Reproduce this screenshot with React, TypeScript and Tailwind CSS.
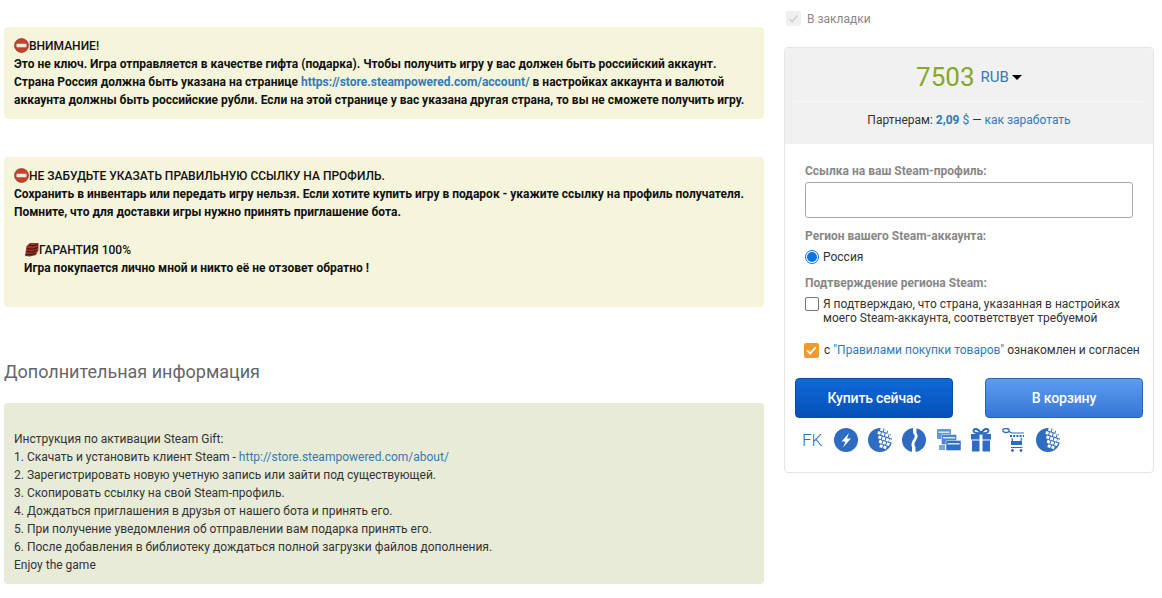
import React from 'react';

const NoEntry = () => (
  <svg width="15" height="15" viewBox="0 0 15 15" className="inline-block align-[-3px]">
    <circle cx="7.5" cy="7.5" r="7" fill="#c8402c" />
    <circle cx="7.5" cy="7.5" r="7" fill="none" stroke="#7d2a1c" strokeWidth="0.6" />
    <rect x="2.5" y="5.8" width="10" height="3.4" rx="0.6" fill="#f4e9df" />
  </svg>
);

const Guarantee = () => (
  <svg width="15" height="15" viewBox="0 0 15 15" className="inline-block align-[-3px]">
    <path d="M1 14 L2.5 4 L6 1 L14.5 1 L14.5 8 L12 13 L6 14.5Z" fill="#9a3226" />
    <path d="M5 3 Q9 5 14 2.5 M3 6.5 Q8 8.5 14 5.5 M2.5 9.5 Q8 11.5 13 8.5 M2 12.5 Q7 13.5 11.5 11.5" stroke="#3a120c" strokeWidth="1" fill="none" />
  </svg>
);

const Webmoney = () => (
  <svg width="24" height="24" viewBox="0 0 24 24">
    <circle cx="12" cy="12" r="12" fill="#2d6cc0" />
    <g transform="rotate(18 12 12)" fill="#fff">
      {[
        [9, 0], [13, 0], [17, 1], [7.5, 4], [11.5, 4], [15.5, 4], [19.5, 4], [9.5, 8], [13.5, 8], [17.5, 8], [21, 8],
        [11.5, 12], [15.5, 12], [19.5, 12], [13.5, 16], [17.5, 16],
      ].map(([x, y]) => (
        <rect key={`${x}-${y}`} x={x} y={y} width="3" height="3" />
      ))}
    </g>
  </svg>
);

const Bolt = () => (
  <svg width="24" height="24" viewBox="0 0 24 24">
    <circle cx="12" cy="12" r="12" fill="#2d6cc0" />
    <path d="M15 5 L7.5 13.5 H11.5 L9 19.5 L17 10.5 H13 Z" fill="#fff" />
  </svg>
);

const Split = () => (
  <svg width="24" height="24" viewBox="0 0 24 24">
    <circle cx="12" cy="12" r="12" fill="#2d6cc0" />
    <path d="M11 -1 L11 5 Q14.5 8 11 12 Q8.5 15.5 10 19 L10 25 L13.5 25 L13.5 19 Q11 16 14 12.5 Q17 8 14.5 5 L14.5 -1Z" fill="#fff" />
  </svg>
);

const Cards = () => (
  <svg width="24" height="24" viewBox="0 0 24 24">
    <rect x="0" y="1" width="14" height="10" rx="1" fill="#5f97d8" />
    <rect x="1.5" y="3.5" width="11" height="1.5" fill="#d6e5f6" />
    <rect x="4.5" y="6.5" width="15" height="10" rx="1" fill="#4a86d0" stroke="#d6e5f6" strokeWidth="0.6" />
    <rect x="6" y="9" width="12" height="1.5" fill="#d6e5f6" />
    <rect x="9" y="12.5" width="15" height="10" rx="1" fill="#2f70c4" stroke="#d6e5f6" strokeWidth="0.6" />
    <rect x="10.5" y="15" width="12" height="1.5" fill="#d6e5f6" />
    <rect x="2" y="17" width="6" height="5" fill="#79a6de" />
  </svg>
);

const Gift = () => (
  <svg width="20" height="24" viewBox="0 0 20 24">
    <path d="M10 5.5 C7 0 2.5 0 2.5 2.8 C2.5 5 6 5.5 10 5.5 C14 5.5 17.5 5 17.5 2.8 C17.5 0 13 0 10 5.5Z" fill="none" stroke="#2d6cc0" strokeWidth="2" />
    <rect x="0" y="6" width="8.5" height="5.5" fill="#2d6cc0" />
    <rect x="11.5" y="6" width="8.5" height="5.5" fill="#2d6cc0" />
    <rect x="1" y="12.5" width="7.5" height="11" fill="#2d6cc0" />
    <rect x="11.5" y="12.5" width="7.5" height="11" fill="#2d6cc0" />
  </svg>
);

const Cart = () => (
  <svg width="24" height="24" viewBox="0 0 24 24">
    <ellipse cx="4" cy="2.5" rx="3.2" ry="2" fill="none" stroke="#2d6cc0" strokeWidth="1.3" />
    <path d="M7 3.5 L10 5 H22" stroke="#2d6cc0" strokeWidth="1.2" fill="none" />
    <path d="M8 8 H22" stroke="#2d6cc0" strokeWidth="2.2" strokeDasharray="2 1.2" />
    <rect x="9" y="13" width="11" height="4" fill="#2d6cc0" />
    <path d="M10 10 L10.5 13 M19.5 10 L19 13 M9 19.5 H20.5" stroke="#2d6cc0" strokeWidth="1.2" />
    <circle cx="10.5" cy="22.5" r="1.4" fill="#2d6cc0" />
    <circle cx="19" cy="22.5" r="1.4" fill="#2d6cc0" />
  </svg>
);

const steps = [
  '2. Зарегистрировать новую учетную запись или зайти под существующей.',
  '3. Скопировать ссылку на свой Steam-профиль.',
  '4. Дождаться приглашения в друзья от нашего бота и принять его.',
  '5. При получение уведомления об отправлении вам подарка принять его.',
  '6. После добавления в библиотеку дождаться полной загрузки файлов дополнения.',
];

const linkCls = 'text-[#337ab7]';
const labelCls = 'text-[12px] font-bold leading-[18px] text-[#888]';

export default function App() {
  return (
    <div className="flex h-[598px] w-[1162px] overflow-hidden bg-white font-['Roboto',sans-serif] text-[12px] leading-[18px] text-[#222]">
      {/* left column */}
      <div className="ml-1 w-[760px] pt-[27px]">
        <div className="rounded-[4px] bg-[#f5f5dc] pl-2.5 pr-2 pt-[10px] pb-[10px] font-bold text-[#111]">
          <div className="font-medium">
            <NoEntry />
            ВНИМАНИЕ!
          </div>
          <div>Это не ключ. Игра отправляется в качестве гифта (подарка). Чтобы получить игру у вас должен быть российский аккаунт.</div>
          <div>
            Страна Россия должна быть указана на странице{' '}
            <span className={linkCls}>https://store.steampowered.com/account/</span> в настройках аккаунта и валютой
          </div>
          <div>аккаунта должны быть российские рубли. Если на этой странице у вас указана другая страна, то вы не сможете получить игру.</div>
        </div>

        <div className="mt-[38px] rounded-[4px] bg-[#f5f5dc] pl-2.5 pr-2 pt-[10px] pb-[30px] font-bold text-[#111]">
          <div className="font-medium">
            <NoEntry />
            НЕ ЗАБУДЬТЕ УКАЗАТЬ ПРАВИЛЬНУЮ ССЫЛКУ НА ПРОФИЛЬ.
          </div>
          <div>Сохранить в инвентарь или передать игру нельзя. Если хотите купить игру в подарок - укажите ссылку на профиль получателя.</div>
          <div>Помните, что для доставки игры нужно принять приглашение бота.</div>
          <div className="mt-[20px] pl-2.5">
            <div className="font-medium">
              <Guarantee />
              ГАРАНТИЯ 100%
            </div>
            <div>Игра покупается лично мной и никто её не отзовет обратно !</div>
          </div>
        </div>

        <h2 className="mt-[52px] text-[18px] leading-[26px] font-normal text-[#666]">Дополнительная информация</h2>

        <div className="mt-[18px] rounded-[4px] bg-[#e7ebd7] pl-2.5 pr-2 pt-[27px] pb-[10px] text-[#333]">
          <div>Инструкция по активации Steam Gift:</div>
          <div>
            1. Скачать и установить клиент Steam - <span className={linkCls}>http://store.steampowered.com/about/</span>
          </div>
          {steps.map(step => (
            <div key={step}>{step}</div>
          ))}
          <div>Enjoy the game</div>
        </div>
      </div>

      {/* right column */}
      <div className="ml-5 w-[370px]">
        <div className="flex h-[47px] items-start pt-[11px] pl-[2px] text-[#888]">
          <span className="flex h-[15px] w-[15px] items-center justify-center rounded-[2px] bg-[#f0f0f0]">
            <svg width="11" height="11" viewBox="0 0 11 11">
              <path d="M1.5 6 L4.2 8.6 L9.5 2.4" fill="none" stroke="#cfcfcf" strokeWidth="1.6" />
            </svg>
          </span>
          <span className="ml-[6px] leading-[16px]">В закладки</span>
        </div>

        <div className="h-[426px] rounded-[4px] border border-[#e5e5e5] bg-white">
          <div className="h-[96px] rounded-t-[4px] bg-[#f1f1f1] px-[10px]">
            <div className="flex h-[54px] items-center justify-center border-b border-[#f9f9f9] pt-[5px]">
              <span className="text-[26px] leading-[30px] text-[#86a72c]">7503</span>
              <span className={`ml-[6px] text-[15px] ${linkCls}`}>RUB</span>
              <span className="ml-[3px] h-0 w-0 border-x-[5px] border-t-[5px] border-x-transparent border-t-black" />
            </div>
            <div className="pt-[9px] text-center text-[#333]">
              Партнерам: <span className={`font-bold ${linkCls}`}>2,09</span> <span className={linkCls}>$</span> — <span className={linkCls}>как заработать</span>
            </div>
          </div>

          <div className="px-5 pt-[18px]">
            <div className={labelCls}>Ссылка на ваш Steam-профиль:</div>
            <input type="text" className="mt-[2px] block h-[36px] w-[328px] rounded-[3px] border border-[#a9a9a9] bg-white" />

            <div className={`mt-[9px] ${labelCls}`}>Регион вашего Steam-аккаунта:</div>
            <div className="mt-[3px] flex items-center">
              <span className="flex h-[14px] w-[14px] items-center justify-center rounded-full border border-[#0b74e5] bg-white">
                <span className="h-[10px] w-[10px] rounded-full bg-[#0b74e5]" />
              </span>
              <span className="ml-[4px] text-[#333]">Россия</span>
            </div>

            <div className={`mt-[8px] ${labelCls}`}>Подтверждение региона Steam:</div>
            <div className="mt-[5px] flex items-start">
              <span className="h-[14px] w-[14px] flex-none rounded-[2px] border border-[#777] bg-white" />
              <span className="ml-[4px] leading-[14px] text-[#333]">
                Я подтверждаю, что страна, указанная в настройках
                <br />
                моего Steam-аккаунта, соответствует требуемой
              </span>
            </div>

            <div className="mt-[16px] -ml-[1px] flex items-center whitespace-nowrap">
              <span className="flex h-[15px] w-[15px] flex-none items-center justify-center rounded-[2px] bg-[#ef9a2d]">
                <svg width="11" height="11" viewBox="0 0 11 11">
                  <path d="M1.2 5.5 L4.2 8.4 L9.8 2.4" fill="none" stroke="#fff" strokeWidth="1.8" />
                </svg>
              </span>
              <span className="ml-[5px] text-[#333]">
                с <span className={linkCls}>"Правилами покупки товаров"</span> ознакомлен и согласен
              </span>
            </div>
          </div>

          <div className="mt-[19px] flex justify-between px-[10px]">
            <button className="h-[40px] w-[158px] rounded-[4px] border border-[#0b4a9e] bg-gradient-to-b from-[#0f6ad8] to-[#0650b8] text-[14px] font-medium tracking-[-0.15px] text-white">
              Купить сейчас
            </button>
            <button className="h-[40px] w-[158px] rounded-[4px] border border-[#2a66b0] bg-gradient-to-b from-[#5c9bf0] to-[#3577d6] text-[14px] font-medium tracking-[-0.15px] text-white">
              В корзину
            </button>
          </div>

          <div className="mt-[10px] flex items-center gap-[10px] pl-[17px]">
            <span className="w-[22px] text-[17px] leading-[24px] font-light text-[#2d6cc0]">FK</span>
            <Bolt />
            <Webmoney />
            <Split />
            <span className="ml-[1px] flex">
              <Cards />
            </span>
            <Gift />
            <span className="ml-[1px] flex">
              <Cart />
            </span>
            <Webmoney />
          </div>
        </div>
      </div>
    </div>
  );
}
